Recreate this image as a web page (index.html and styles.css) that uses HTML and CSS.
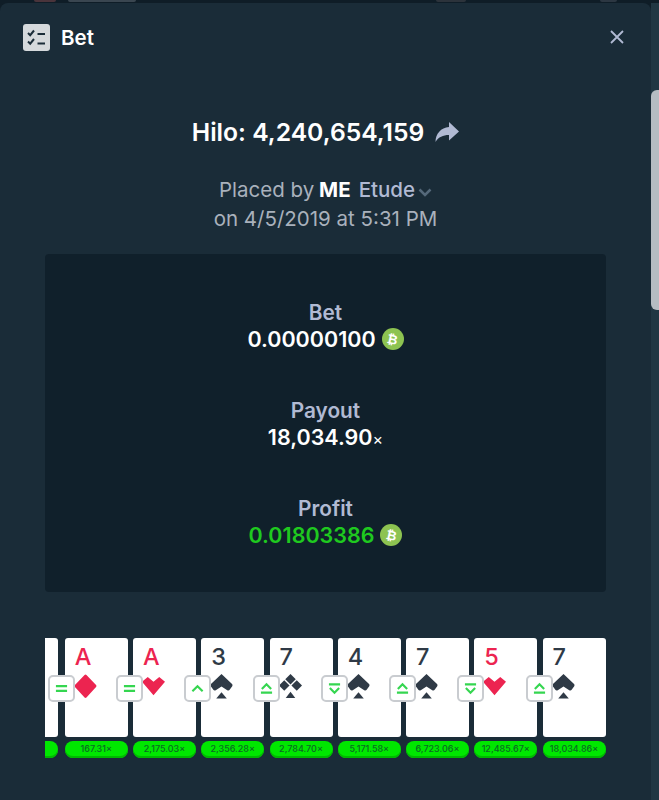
FILE: index.html
```html
<!DOCTYPE html>
<html lang="en">
<head>
<meta charset="utf-8">
<title>Bet</title>
<link rel="stylesheet" href="styles.css">
</head>
<body>
<svg class="defs" width="0" height="0">
  <symbol id="spade" viewBox="0 0 24 26"><path d="M12 0L23 10.500Q24 11.500 23.200 12.800L20.500 16.500Q19.500 17.500 18 16.800L12 13L6 16.800Q4.500 17.500 3.500 16.500L0.800 12.800Q0 11.500 1 10.500Z"/><path d="M12 19L17.500 25.500H6.500Z"/></symbol>
  <symbol id="diamond" viewBox="0 0 24 26"><path d="M12 0.500Q12.500 0.500 13 1L23 11.500Q24 12.500 23 13.500L13 24.500Q12 25.500 11 24.500L1 13.500Q0 12.500 1 11.500L11 1Q11.500 0.500 12 0.500Z"/></symbol>
  <symbol id="heart" viewBox="0 0 24 26"><path d="M0 8L6 3L12 8L18 3L24 8L12 22Z"/></symbol>
  <symbol id="club" viewBox="0 0 24 26"><path d="M12 0L17.500 5.500L12 11L6.500 5.500Z"/><path d="M5.500 6.500L11 12L5.500 17.500L0 12Z"/><path d="M18.500 6.500L24 12L18.500 17.500L13 12Z"/><path d="M12 18.500L17 25H7Z"/></symbol>
  <symbol id="eq" viewBox="0 0 14 14"><path d="M1 4.500H13M1 9.500H13"/></symbol>
  <symbol id="up" viewBox="0 0 14 14"><path d="M1.500 10L7 4.500L12.500 10"/></symbol>
  <symbol id="upeq" viewBox="0 0 14 14"><path d="M2 7.500L7 2.500L12 7.500M1 11.500H13"/></symbol>
  <symbol id="downeq" viewBox="0 0 14 14"><path d="M1 2.500H13M2 6.500L7 11.500L12 6.500"/></symbol>
</svg>

<div class="backdrop-strip"><i class="blur-a"></i><i class="blur-b"></i><i class="blur-c"></i><i class="blur-d"></i></div>
<main class="modal">
  <header class="modal-head">
    <div class="modal-title">
      <svg class="title-icon" viewBox="0 0 27 27" aria-hidden="true">
        <rect width="27" height="27" rx="3" fill="#d5d9dc"/>
        <path d="M5 9l2.200 2.200L11 6.500M5 17.500l2.200 2.200L11 15" fill="none" stroke="#1a2c38" stroke-width="2"/>
        <path d="M14.500 10H22M14.500 19.500H22" fill="none" stroke="#1a2c38" stroke-width="2"/>
      </svg>
      <span>Bet</span>
    </div>
    <svg class="close" viewBox="0 0 14 14" aria-hidden="true"><path d="M1 1L13 13M13 1L1 13"/></svg>
  </header>

  <section class="summary">
    <h1 class="bet-id">Hilo: 4,240,654,159
      <svg class="share" viewBox="0 0 24 20" aria-hidden="true"><path d="M14 0L24 9.500L14 18.500V13C8 13 3.500 15 0.500 20C0.500 12 6 5.500 14 5Z"/></svg>
    </h1>
    <p class="placed">Placed by <b class="badge">ME</b> <span class="user">Etude</span><svg class="chev" viewBox="0 0 14 9" aria-hidden="true"><path d="M1.500 1.500L7 7L12.500 1.500"/></svg></p>
    <p class="placed">on 4/5/2019 at 5:31 PM</p>
  </section>

  <section class="stats">
    <div class="stat">
      <div class="stat-label">Bet</div>
      <div class="stat-value">0.00000100 <span class="coin"><span class="coin-mark">₿</span></span></div>
    </div>
    <div class="stat">
      <div class="stat-label">Payout</div>
      <div class="stat-value"><span>18,034.90<span class="times">×</span></span></div>
    </div>
    <div class="stat">
      <div class="stat-label">Profit</div>
      <div class="stat-value win">0.01803386 <span class="coin"><span class="coin-mark">₿</span></span></div>
    </div>
  </section>

  <section class="cards">
    <div class="slot"><div class="card"></div><div class="pill"></div></div>
    <div class="slot"><div class="card red"><span class="rank">A</span><svg class="suit"><use href="#diamond"/></svg><span class="act"><svg><use href="#eq"/></svg></span></div><div class="pill">167.31×</div></div>
    <div class="slot"><div class="card red"><span class="rank">A</span><svg class="suit"><use href="#heart"/></svg><span class="act"><svg><use href="#eq"/></svg></span></div><div class="pill">2,175.03×</div></div>
    <div class="slot"><div class="card"><span class="rank">3</span><svg class="suit"><use href="#spade"/></svg><span class="act"><svg><use href="#up"/></svg></span></div><div class="pill">2,356.28×</div></div>
    <div class="slot"><div class="card"><span class="rank">7</span><svg class="suit"><use href="#club"/></svg><span class="act"><svg><use href="#upeq"/></svg></span></div><div class="pill">2,784.70×</div></div>
    <div class="slot"><div class="card"><span class="rank">4</span><svg class="suit"><use href="#spade"/></svg><span class="act"><svg><use href="#downeq"/></svg></span></div><div class="pill">5,171.58×</div></div>
    <div class="slot"><div class="card"><span class="rank">7</span><svg class="suit"><use href="#spade"/></svg><span class="act"><svg><use href="#upeq"/></svg></span></div><div class="pill">6,723.06×</div></div>
    <div class="slot"><div class="card red"><span class="rank">5</span><svg class="suit"><use href="#heart"/></svg><span class="act"><svg><use href="#downeq"/></svg></span></div><div class="pill">12,485.67×</div></div>
    <div class="slot"><div class="card"><span class="rank">7</span><svg class="suit"><use href="#spade"/></svg><span class="act"><svg><use href="#upeq"/></svg></span></div><div class="pill">18,034.86×</div></div>
  </section>
</main>
<div class="scroll-track"><div class="scroll-thumb"></div></div>
</body>
</html>
```
FILE: styles.css
```css
* { box-sizing: border-box; }
html, body { margin: 0; height: 100%; }
body {
  position: relative;
  width: 659px;
  height: 800px;
  overflow: hidden;
  background: #0f1d27;
  color: #fff;
  font-family: "Inter", "Liberation Sans", sans-serif;
}
.defs { position: absolute; }
.backdrop-strip { position: relative; height: 3px; background: #0f1d27; }
.backdrop-strip i { position: absolute; top: 0; height: 2px; border-radius: 0 0 2px 2px; }
.blur-a { left: 34px; width: 22px; background: #4a343b; }
.blur-b { left: 68px; width: 68px; background: #3a4650; }
.blur-c { left: 436px; width: 30px; background: #2c333b; }
.blur-d { left: 600px; width: 17px; background: #2c3742; }
.modal {
  width: 651px;
  height: 797px;
  border-radius: 8px 8px 0 0;
  background: #1a2c38;
  padding: 0 45px;
}
.modal-head {
  display: flex;
  align-items: center;
  justify-content: space-between;
  margin: 0 -18px 0 -22px;
  padding-top: 19px;
  height: 49px;
}
.modal-title {
  display: flex;
  align-items: center;
  gap: 11px;
  font-size: 20.500px;
  font-weight: 600;
}
.title-icon { width: 27px; height: 27px; }
.close { width: 14px; height: 14px; fill: none; stroke: #b1bad3; stroke-width: 1.800; }
.summary { margin-top: 62px; text-align: center; }
.bet-id {
  display: flex;
  align-items: center;
  justify-content: center;
  gap: 11px;
  margin: 0 0 25px;
  font-size: 24.700px;
  font-weight: 600;
  line-height: 36px;
}
.share { width: 24px; height: 20px; fill: #b1bad3; }
.placed {
  margin: 0;
  color: #a9b1bc;
  font-size: 20.500px;
  line-height: 29px;
}
.badge { margin: 0 2px 0 -1px; color: #fff; font-weight: 700; letter-spacing: 0.200px; }
.user { color: #b1bad3; font-weight: 500; }
.chev { width: 14px; height: 9px; margin-left: 3px; fill: none; stroke: #55697a; stroke-width: 2.500; }
.stats {
  margin-top: 21px;
  height: 338px;
  padding-top: 45px;
  border-radius: 4px;
  background: #10202b;
  text-align: center;
}
.stat { height: 98px; }
.stat-label { height: 26px; padding-top: 1px; color: #b1bad3; font-size: 20.800px; font-weight: 600; line-height: 26px; }
.stat-value {
  display: flex;
  align-items: center;
  justify-content: center;
  gap: 6px;
  font-size: 21.500px;
  font-weight: 600;
  line-height: 28px;
}
.times { font-size: 16px; font-weight: 400; }
.win { color: #1fc91f; }
.coin {
  display: flex;
  align-items: center;
  justify-content: center;
  width: 22px;
  height: 22px;
  border-radius: 50%;
  background: #8dc351;
}
.coin-mark {
  color: #fff;
  font-family: "DejaVu Sans", sans-serif;
  font-size: 13px;
  font-weight: 700;
  line-height: 1;
  transform: rotate(12deg);
}
.cards {
  display: flex;
  justify-content: flex-end;
  gap: 5.250px;
  margin-top: 46px;
  padding-right: 0.500px;
  overflow: hidden;
}
.slot { flex: 0 0 63px; }
.slot:first-child { margin-right: 1.500px; }
.card {
  position: relative;
  height: 99px;
  padding: 5px 0 0 10px;
  border-radius: 3px;
  background: #fff;
  color: #2f3a46;
}
.card.red { color: #ec2450; }
.rank { display: block; font-size: 23.500px; font-weight: 500; line-height: 28px; }
.suit { display: block; width: 23px; height: 25px; margin: 3px 0 0 -1px; fill: currentColor; }
.act {
  position: absolute;
  left: -17px;
  top: 37px;
  display: flex;
  align-items: center;
  justify-content: center;
  width: 27px;
  height: 27px;
  border: 2px solid #c9ccd0;
  border-radius: 5px;
  background: #fff;
}
.act svg { width: 13px; height: 13px; fill: none; stroke: #35d650; stroke-width: 2.300; }
.pill {
  height: 17px;
  margin-top: 4px;
  border-radius: 8px;
  background: #00e700;
  box-shadow: inset 0 -2px 0 #00b800;
  color: #0b6a24;
  font-size: 9px;
  font-weight: 500;
  line-height: 15px;
  text-align: center;
}
.scroll-track {
  position: absolute;
  top: 3px;
  right: 0;
  width: 8px;
  height: 797px;
  padding-top: 87px;
  background: #213743;
}
.scroll-thumb {
  height: 220px;
  border-radius: 6px 0 0 6px;
  background: #b5bcc2;
}
```
